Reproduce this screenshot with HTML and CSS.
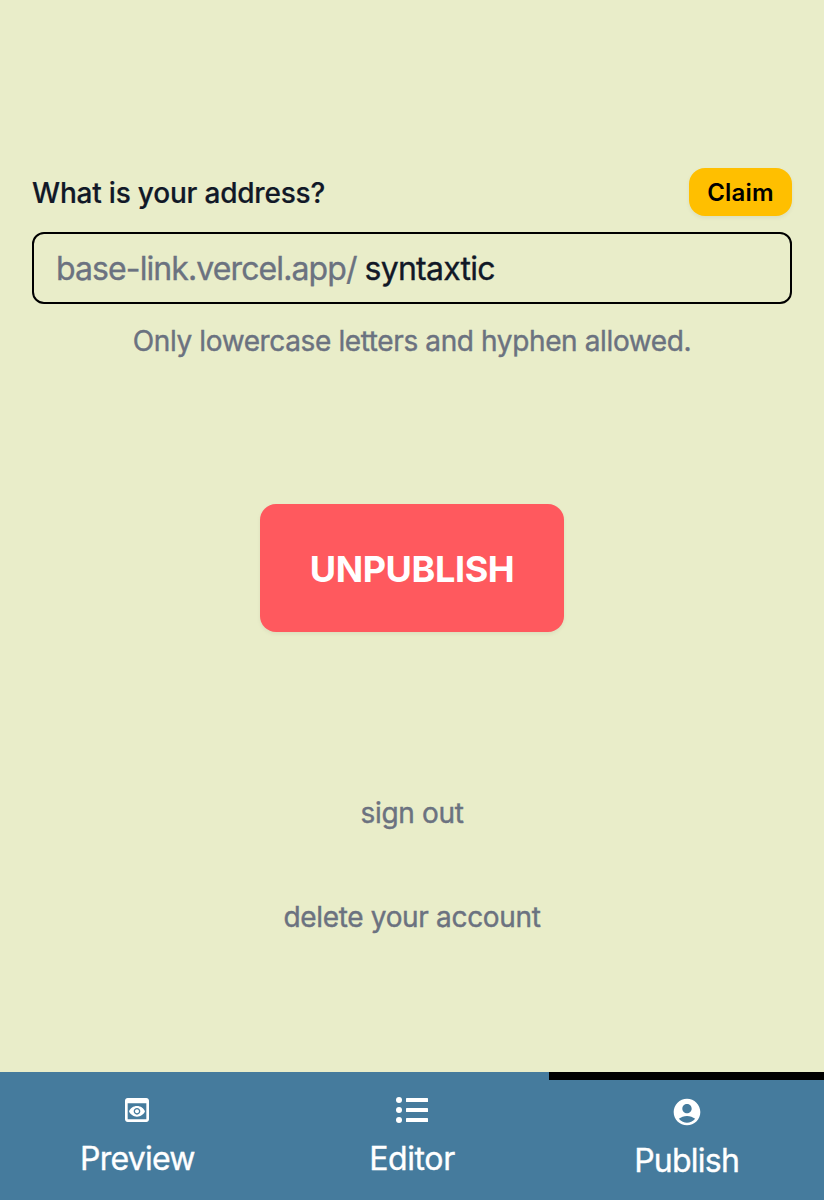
FILE: index.html
```html
<!DOCTYPE html>
<html lang="en">
<head>
<meta charset="utf-8">
<title>Publish</title>
<link rel="stylesheet" href="styles.css">
</head>
<body>
<div class="app">
  <main class="content">
    <section class="address">
      <div class="address-head">
        <span class="label">What is your address?</span>
        <button class="claim">Claim</button>
      </div>
      <div class="field"><span class="prefix">base-link.vercel.app/</span><span class="value">syntaxtic</span></div>
      <p class="hint">Only lowercase letters and hyphen allowed.</p>
    </section>
    <button class="unpublish">UNPUBLISH</button>
    <a class="link signout">sign out</a>
    <a class="link delete">delete your account</a>
  </main>
  <nav class="tabs">
    <a class="tab preview">
      <svg class="icon" viewBox="0 0 24 24" fill="currentColor"><path d="M19 3H5c-1.110 0-2 .9-2 2v14c0 1.100.89 2 2 2h14c1.100 0 2-.9 2-2V5c0-1.100-.89-2-2-2zm0 16H5V7h14v12zm-5.500-6c0 .83-.67 1.500-1.500 1.500s-1.500-.67-1.500-1.500.67-1.500 1.500-1.500 1.500.67 1.500 1.500zM12 9c-2.730 0-5.060 1.660-6 4 .94 2.340 3.270 4 6 4s5.060-1.660 6-4c-.94-2.340-3.270-4-6-4zm0 6.500c-1.380 0-2.500-1.120-2.500-2.500s1.120-2.500 2.500-2.500 2.500 1.120 2.500 2.500-1.120 2.500-2.500 2.500z"/></svg>
      <span>Preview</span>
    </a>
    <a class="tab editor">
      <svg class="icon" viewBox="0 0 32 32" fill="currentColor"><circle cx="3" cy="6" r="3"/><circle cx="3" cy="16" r="3"/><circle cx="3" cy="26" r="3"/><rect x="10" y="4" width="22" height="4" rx=".6"/><rect x="10" y="14" width="22" height="4" rx=".6"/><rect x="10" y="24" width="22" height="4" rx=".6"/></svg>
      <span>Editor</span>
    </a>
    <a class="tab publish active">
      <svg class="icon" viewBox="0 0 24 24" fill="currentColor"><path d="M12 2C6.480 2 2 6.480 2 12s4.480 10 10 10 10-4.480 10-10S17.520 2 12 2zm0 4c1.930 0 3.500 1.570 3.500 3.500S13.930 13 12 13s-3.500-1.570-3.500-3.500S10.070 6 12 6zm0 14c-2.030 0-4.430-.82-6.140-2.880C7.550 15.800 9.680 15 12 15s4.450.8 6.140 2.120C16.430 19.180 14.030 20 12 20z"/></svg>
      <span>Publish</span>
    </a>
  </nav>
</div>
</body>
</html>
```
FILE: styles.css
```css
* { box-sizing: border-box; }
body { margin: 0; font-family: Inter, "Liberation Sans", sans-serif; background: #e9edc9; color: #111827; }
button { border: 0; padding: 0; font-family: inherit; }
.app { height: 1200px; display: flex; flex-direction: column; }
.content { flex: 1; padding: 168px 32px 0; display: flex; flex-direction: column; align-items: center; }
.address { width: 100%; }
.address-head { height: 48px; display: flex; justify-content: space-between; align-items: center; }
.label { font-size: 28px; line-height: 40px; font-weight: 500; letter-spacing: -0.2px; padding-top: 2px; -webkit-text-stroke: 0.2px; }
.claim { width: 103px; height: 48px; border-radius: 16px; background: #ffbf00; color: #000; font-size: 24px; font-weight: 600; letter-spacing: 0.2px; box-shadow: 0 2px 4px rgba(0,0,0,.06); }
.field { height: 72px; margin-top: 16px; border: 2px solid #000; border-radius: 12px; padding: 0 22px; display: flex; align-items: center; gap: 8px; font-size: 32px; white-space: nowrap; -webkit-text-stroke: 0.35px; }
.prefix { color: #6b7280; letter-spacing: -0.9px; }
.value { letter-spacing: -0.75px; }
.hint { margin: 17px 0 0; text-align: center; color: #6b7280; font-size: 28px; line-height: 40px; letter-spacing: -0.38px; white-space: nowrap; -webkit-text-stroke: 0.4px; }
.unpublish { width: 304px; height: 128px; margin-top: 143px; padding-top: 2px; border-radius: 16px; background: #ff595e; color: #fff; font-size: 36px; font-weight: 700; letter-spacing: -0.4px; box-shadow: 0 2px 4px rgba(0,0,0,.06); }
.link { color: #6b7280; font-size: 28px; line-height: 40px; letter-spacing: -0.33px; white-space: nowrap; -webkit-text-stroke: 0.4px; }
.signout { margin-top: 161px; }
.delete { margin-top: 64px; }
.tabs { height: 128px; display: grid; grid-template-columns: repeat(3, 1fr); background: #457b9d; color: #fff; }
.tab { display: flex; flex-direction: column; align-items: center; padding-top: 22px; font-size: 32px; line-height: 48px; letter-spacing: -0.75px; -webkit-text-stroke: 0.35px; }
.editor { letter-spacing: -0.4px; }
.icon { width: 32px; height: 32px; display: block; margin-bottom: 9px; }
.active { border-top: 8px solid #000; padding-top: 16px; }
```
